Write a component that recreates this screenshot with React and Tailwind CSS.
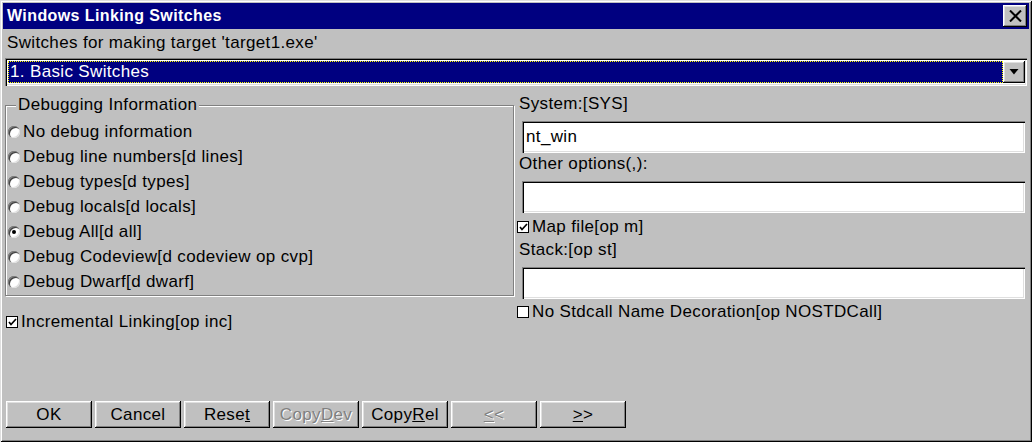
// Win95-style "Windows Linking Switches" dialog
const raised =
    'shadow-[inset_-1px_-1px_0_#000000,inset_1px_1px_0_#ffffff,inset_-2px_-2px_0_#808080,inset_2px_2px_0_#dfdfdf]';
const sunken =
    'shadow-[inset_1px_1px_0_#808080,inset_2px_2px_0_#000000,inset_-1px_-1px_0_#ffffff,inset_-2px_-2px_0_#dfdfdf]';

const debugOptions = [
    'No debug information',
    'Debug line numbers[d lines]',
    'Debug types[d types]',
    'Debug locals[d locals]',
    'Debug All[d all]',
    'Debug Codeview[d codeview op cvp]',
    'Debug Dwarf[d dwarf]',
];

function Radio({ label, checked }) {
    return (
        <div className="h-[25px] flex items-center">
            <span className="w-[12px] h-[12px] rounded-full bg-white shadow-[inset_1px_1px_0_#808080,inset_2px_2px_0_#404040,inset_-1px_-1px_0_#dfdfdf] flex items-center justify-center">
                {checked && <span className="w-[4px] h-[4px] rounded-full bg-black" />}
            </span>
            <span className="ml-[3px]">{label}</span>
        </div>
    );
}

function Checkbox({ label, checked }) {
    return (
        <div className="h-[20px] flex items-center">
            <span className="w-[12px] h-[12px] bg-white border border-black flex items-center justify-center">
                {checked && (
                    <svg width="9" height="9" viewBox="0 0 9 9">
                        <path d="M1 4 L3 6.5 L8 1" stroke="#000" strokeWidth="1.7" fill="none" />
                    </svg>
                )}
            </span>
            <span className="ml-[3px]">{label}</span>
        </div>
    );
}

function TextField({ value, className }) {
    return (
        <div className={`h-[32px] bg-white ${sunken} flex items-center pl-[4px] ${className}`}>
            {value}
        </div>
    );
}

function Button({ children, disabled }) {
    return (
        <div
            className={`w-[86px] h-[27px] flex items-center justify-center ${raised} ${
                disabled ? 'text-[#808080] [text-shadow:1px_1px_0_#ffffff]' : 'text-black'
            }`}
        >
            {children}
        </div>
    );
}

export default function App() {
    return (
        <div className="w-[1032px] h-[442px] bg-[#c0c0c0] flex flex-col p-[3px] text-[17px] tracking-[0.35px] text-black font-['Liberation_Sans',Arial,sans-serif] shadow-[inset_1px_1px_0_#dfdfdf,inset_-1px_-1px_0_#000000,inset_2px_2px_0_#ffffff,inset_-2px_-2px_0_#808080]">
            {/* Title bar */}
            <div className="h-[26px] bg-[#000080] flex items-center justify-between pl-[4px] pr-[2px]">
                <span className="text-white font-bold text-[16px] tracking-[0.4px]">Windows Linking Switches</span>
                <div className={`w-[24px] h-[22px] bg-[#c0c0c0] ${raised} flex items-center justify-center`}>
                    <svg width="13" height="12" viewBox="0 0 13 12">
                        <path d="M1 0.5 L12 11.5 M12 0.5 L1 11.5" stroke="#000" strokeWidth="2" />
                    </svg>
                </div>
            </div>

            {/* Target caption */}
            <div className="mt-[5px] pl-[4px] h-[18px] leading-[18px]">
                Switches for making target 'target1.exe'
            </div>

            {/* Switch set combobox */}
            <div className={`mt-[6px] mx-[2px] h-[28px] bg-white ${sunken} flex items-center p-[3px] pr-[2px]`}>
                <div className="flex-1 h-full bg-[#000080] text-white border border-dotted border-[#ffff00] flex items-center pl-[1px]">
                    1. Basic Switches
                </div>
                <div className={`w-[22px] h-full bg-[#c0c0c0] ${raised} flex items-center justify-center`}>
                    <svg width="10" height="6" viewBox="0 0 10 6">
                        <path d="M0.5 0 L9.5 0 L5 5.5 Z" fill="#000" />
                    </svg>
                </div>
            </div>

            {/* Main area */}
            <div className="mt-[8px] px-[2px] flex gap-[3px]">
                {/* Left column */}
                <div className="w-[509px] flex flex-col">
                    <div className="relative mt-[11px] h-[191px] border border-[#808080] shadow-[inset_1px_1px_0_#ffffff,1px_1px_0_#ffffff] pt-[13px] pl-[2px]">
                        <span className="absolute left-[10px] top-[-11px] px-[2px] bg-[#c0c0c0] leading-[20px]">
                            Debugging Information
                        </span>
                        {debugOptions.map((opt, i) => (
                            <Radio key={opt} label={opt} checked={i === 4} />
                        ))}
                    </div>
                    <div className="mt-[16px] pl-[1px]">
                        <Checkbox label="Incremental Linking[op inc]" checked />
                    </div>
                </div>

                {/* Right column */}
                <div className="flex-1 flex flex-col">
                    <div className="h-[20px] leading-[20px] pl-[2px]">System:[SYS]</div>
                    <TextField value="nt_win" className="mt-[7px] ml-[5px] mr-[2px]" />
                    <div className="h-[20px] leading-[20px] pl-[2px] mt-[1px]">Other options(,):</div>
                    <TextField value="" className="mt-[7px] ml-[5px] mr-[2px]" />
                    <div className="mt-[4px]">
                        <Checkbox label="Map file[op m]" checked />
                    </div>
                    <div className="h-[20px] leading-[20px] pl-[2px] mt-[3px]">Stack:[op st]</div>
                    <TextField value="" className="mt-[7px] ml-[5px] mr-[2px]" />
                    <div className="mt-[3px]">
                        <Checkbox label="No Stdcall Name Decoration[op NOSTDCall]" />
                    </div>
                </div>
            </div>

            {/* Button row */}
            <div className="mt-auto mb-[11px] pl-[3px] flex gap-[3px]">
                <Button>OK</Button>
                <Button>Cancel</Button>
                <Button>Rese<u>t</u></Button>
                <Button disabled>Copy<u>D</u>ev</Button>
                <Button>Copy<u>R</u>el</Button>
                <Button disabled><u>&lt;</u>&lt;</Button>
                <Button><u>&gt;</u>&gt;</Button>
            </div>
        </div>
    );
}
